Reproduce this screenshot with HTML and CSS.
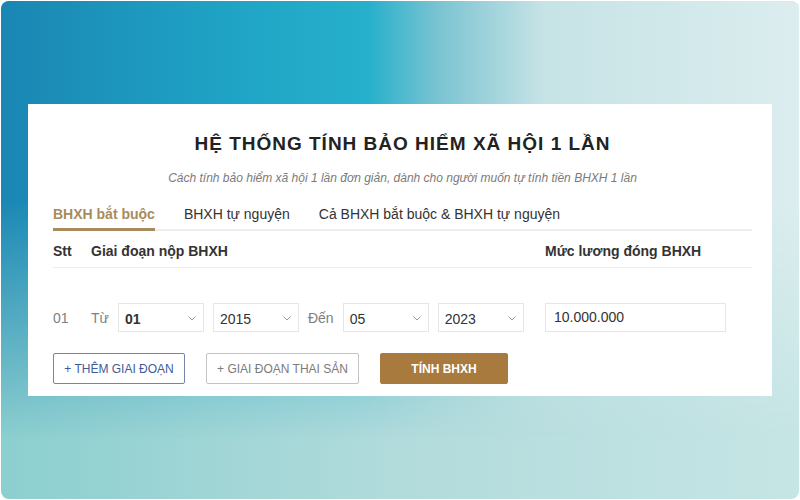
FILE: index.html
```html
<!DOCTYPE html>
<html lang="vi">

<head>
    <meta charset="UTF-8">
    <title>Hệ thống tính bảo hiểm xã hội 1 lần</title>
    <link rel="stylesheet" href="styles.css">
</head>

<body>

    <div class="scene">

        <div class="card">

            <h1 class="title">HỆ THỐNG TÍNH BẢO HIỂM XÃ HỘI 1 LẦN</h1>
            <p class="subtitle">Cách tính bảo hiểm xã hội 1 lần đơn giản, dành cho người muốn tự tính tiền BHXH 1 lần</p>

            <!-- Tabs -->
            <div class="tabs">
                <span class="tab active">BHXH bắt buộc</span>
                <span class="tab">BHXH tự nguyện</span>
                <span class="tab">Cả BHXH bắt buộc &amp; BHXH tự nguyện</span>
            </div>

            <!-- Cabecera de la tabla -->
            <div class="grid-row head-row">
                <span>Stt</span>
                <span>Giai đoạn nộp BHXH</span>
                <span>Mức lương đóng BHXH</span>
            </div>

            <!-- Fila de periodo -->
            <div class="grid-row period-row">
                <span class="muted">01</span>
                <div class="period">
                    <span class="muted">Từ</span>
                    <div class="select strong">01
                        <svg class="chev" viewBox="0 0 8 5"><polyline points="0.5 0.5, 4 4, 7.5 0.5" /></svg>
                    </div>
                    <div class="select">2015
                        <svg class="chev" viewBox="0 0 8 5"><polyline points="0.5 0.5, 4 4, 7.5 0.5" /></svg>
                    </div>
                    <span class="muted">Đến</span>
                    <div class="select">05
                        <svg class="chev" viewBox="0 0 8 5"><polyline points="0.5 0.5, 4 4, 7.5 0.5" /></svg>
                    </div>
                    <div class="select">2023
                        <svg class="chev" viewBox="0 0 8 5"><polyline points="0.5 0.5, 4 4, 7.5 0.5" /></svg>
                    </div>
                </div>
                <div class="salary">10.000.000</div>
            </div>

            <!-- Botones -->
            <div class="actions">
                <button class="btn btn-add">+ THÊM GIAI ĐOẠN</button>
                <button class="btn btn-maternity">+ GIAI ĐOẠN THAI SẢN</button>
                <button class="btn btn-calc">TÍNH BHXH</button>
            </div>

        </div>

    </div>

</body>

</html>
```

FILE: styles.css
```css
body {
    margin: 0;
    padding: 1px;
    background-color: #ffffff;
    font-family: "Liberation Sans", Arial, sans-serif;
    color: #222222;
}

.scene {
    position: relative;
    height: 498px;
    border-radius: 8px;
    overflow: hidden;
    padding-top: 103px;
    box-sizing: border-box;
    background: linear-gradient(to right, #8ccfcf, #b2dbdc 50%, #c6e5e5);
}

/* capa azul superior que se desvanece hacia abajo */
.scene::before {
    content: "";
    position: absolute;
    inset: 0;
    background: linear-gradient(to right, #1a86b3 0%, #1fa3c5 28%, #26b0cb 46%, #7cc4d2 55%, #c6e3e6 68%, #dcedee 100%);
    -webkit-mask-image: linear-gradient(to bottom, #000 0%, #000 40%, transparent 88%);
    mask-image: linear-gradient(to bottom, #000 0%, #000 40%, transparent 88%);
}

.card {
    position: relative;
    margin: 0 27px;
    background-color: #ffffff;
    padding: 28px 20px 12px 25px;
}

.title {
    margin: 0;
    text-align: center;
    font-size: 19px;
    line-height: 24px;
    letter-spacing: 1px;
    font-weight: bold;
    color: #222222;
}

.subtitle {
    margin: 14px 0 0;
    text-align: center;
    font-size: 12px;
    line-height: 16px;
    font-style: italic;
    color: #7a7a7a;
}

.tabs {
    display: flex;
    gap: 29px;
    margin-top: 18px;
    border-bottom: 2px solid #eeeeee;
}

.tab {
    font-size: 14px;
    line-height: 20px;
    padding-bottom: 4px;
    border-bottom: 3px solid transparent;
    margin-bottom: -2px;
    color: #333333;
}

.tab.active {
    font-weight: bold;
    color: #a88b5c;
    border-bottom-color: #a88b5c;
}

.grid-row {
    display: grid;
    grid-template-columns: 38px 454px 1fr;
    align-items: center;
}

.head-row {
    margin-top: 10px;
    padding-bottom: 6px;
    border-bottom: 1px solid #eeeeee;
    font-size: 14px;
    line-height: 20px;
    font-weight: bold;
    color: #333333;
}

.period-row {
    margin-top: 35px;
    font-size: 14px;
}

.muted {
    color: #808080;
}

.period {
    display: flex;
    align-items: center;
    gap: 9px;
}

.select {
    width: 86px;
    height: 29px;
    box-sizing: border-box;
    border: 1px solid #e6e6e6;
    display: flex;
    align-items: center;
    justify-content: space-between;
    padding: 2px 7px 0 6px;
    color: #333333;
}

.select.strong {
    font-weight: bold;
}

.chev {
    width: 8px;
    height: 5px;
    fill: none;
    stroke: #9a9a9a;
    stroke-width: 1;
}

.salary {
    width: 181px;
    height: 29px;
    box-sizing: border-box;
    border: 1px solid #e6e6e6;
    padding: 0 8px;
    line-height: 27px;
    color: #333333;
}

.actions {
    display: flex;
    gap: 21px;
    margin-top: 21px;
}

.btn {
    height: 31px;
    font-family: inherit;
    font-size: 12px;
    background-color: #ffffff;
    border: 1px solid #c4c4c4;
    border-radius: 2px;
    padding: 0;
    text-align: center;
}

.btn-add {
    width: 132px;
    border-color: #7185ad;
    color: #3d5b9b;
}

.btn-maternity {
    width: 153px;
    color: #7b7b7b;
}

.btn-calc {
    width: 128px;
    border-color: #a87a3e;
    background-color: #a87a3e;
    color: #ffffff;
    font-weight: bold;
}
```
